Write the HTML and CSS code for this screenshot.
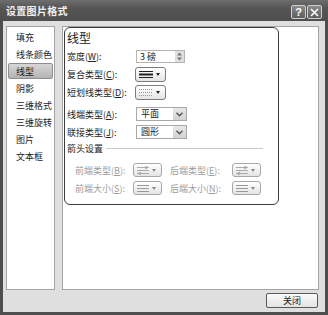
FILE: index.html
```html
<!DOCTYPE html>
<html lang="zh-CN">
<head>
    <meta charset="UTF-8">
    <title>设置图片格式</title>
    <link rel="stylesheet" href="styles.css">
</head>
<body>

    <div class="dialog">
        <div class="titlebar">
            <span class="title">设置图片格式</span>
            <div class="caption-btns">
                <span class="cap-btn">?</span>
                <span class="cap-btn">
                    <svg width="9" height="9" viewBox="0 0 9 9"><path d="M1 1 L8 8 M8 1 L1 8" stroke="#fff" stroke-width="1.6"/></svg>
                </span>
            </div>
        </div>

        <div class="body">
            <div class="panes">
                <ul class="nav">
                    <li>填充</li>
                    <li>线条颜色</li>
                    <li class="selected">线型</li>
                    <li>阴影</li>
                    <li>三维格式</li>
                    <li>三维旋转</li>
                    <li>图片</li>
                    <li>文本框</li>
                </ul>

                <div class="page">
                    <div class="group">
                        <div class="group-title">线型</div>

                        <div class="row">
                            <span class="label">宽度(<u>W</u>):</span>
                            <div class="spinner">
                                <span class="spin-value">3 磅</span>
                                <span class="spin-btn">
                                    <svg width="7" height="9" viewBox="0 0 7 9"><path d="M3.5 0.5 L6 3.5 L1 3.5 Z M3.5 8.5 L6 5.5 L1 5.5 Z" fill="#777"/></svg>
                                </span>
                            </div>
                        </div>

                        <div class="row">
                            <span class="label">复合类型(<u>C</u>):</span>
                            <div class="pick">
                                <svg width="14" height="9" viewBox="0 0 14 9"><path d="M0 1.5 H14 M0 7.5 H14" stroke="#222" stroke-width="1"/><path d="M0 4.5 H14" stroke="#222" stroke-width="2"/></svg>
                                <span class="caret"></span>
                            </div>
                        </div>

                        <div class="row">
                            <span class="label">短划线类型(<u>D</u>):</span>
                            <div class="pick">
                                <svg width="14" height="9" viewBox="0 0 14 9"><path d="M0 1.5 H14 M0 4.5 H14 M0 7.5 H14" stroke="#999" stroke-width="1" stroke-dasharray="1 1"/></svg>
                                <span class="caret"></span>
                            </div>
                        </div>

                        <div class="row gap">
                            <span class="label">线端类型(<u>A</u>):</span>
                            <div class="select">
                                <span class="select-value">平面</span>
                                <span class="select-btn">
                                    <svg width="7" height="5" viewBox="0 0 7 5"><path d="M0.5 0.8 L3.5 3.8 L6.5 0.8" fill="none" stroke="#555" stroke-width="1.4"/></svg>
                                </span>
                            </div>
                        </div>

                        <div class="row">
                            <span class="label">联接类型(<u>J</u>):</span>
                            <div class="select">
                                <span class="select-value">圆形</span>
                                <span class="select-btn">
                                    <svg width="7" height="5" viewBox="0 0 7 5"><path d="M0.5 0.8 L3.5 3.8 L6.5 0.8" fill="none" stroke="#555" stroke-width="1.4"/></svg>
                                </span>
                            </div>
                        </div>

                        <div class="subhead">
                            <span>箭头设置</span>
                            <span class="rule"></span>
                        </div>

                        <div class="row sub">
                            <span class="label dim">前端类型(<u>B</u>):</span>
                            <div class="pick small disabled">
                                <svg width="12" height="9" viewBox="0 0 12 9"><path d="M0 1.5 H12 M0 4.5 H12 M0 7.5 H12" stroke="#aaa" stroke-width="1"/><path d="M8 0 L11 1.5 L8 3 M4 6 L1 7.5 L4 9" fill="none" stroke="#aaa" stroke-width="1"/></svg>
                                <span class="caret"></span>
                            </div>
                            <span class="label dim second">后端类型(<u>E</u>):</span>
                            <div class="pick small disabled">
                                <svg width="12" height="9" viewBox="0 0 12 9"><path d="M0 1.5 H12 M0 4.5 H12 M0 7.5 H12" stroke="#aaa" stroke-width="1"/><path d="M8 0 L11 1.5 L8 3 M4 6 L1 7.5 L4 9" fill="none" stroke="#aaa" stroke-width="1"/></svg>
                                <span class="caret"></span>
                            </div>
                        </div>

                        <div class="row sub">
                            <span class="label dim">前端大小(<u>S</u>):</span>
                            <div class="pick small disabled">
                                <svg width="12" height="9" viewBox="0 0 12 9"><path d="M0 1.5 H12 M0 4.5 H12 M0 7.5 H12" stroke="#999" stroke-width="1.2"/></svg>
                                <span class="caret"></span>
                            </div>
                            <span class="label dim second">后端大小(<u>N</u>):</span>
                            <div class="pick small disabled">
                                <svg width="12" height="9" viewBox="0 0 12 9"><path d="M0 1.5 H12 M0 4.5 H12 M0 7.5 H12" stroke="#999" stroke-width="1.2"/></svg>
                                <span class="caret"></span>
                            </div>
                        </div>
                    </div>
                </div>
            </div>

            <div class="footer">
                <button class="btn">关闭</button>
            </div>
        </div>
    </div>

</body>
</html>
```

FILE: styles.css
```css
body {
    margin: 0;
    font-family: "Noto Sans CJK SC", "Liberation Sans", sans-serif;
    font-size: 9px;
    color: #222;
}
.dialog {
    width: 328px;
    height: 315px;
    box-sizing: border-box;
    padding: 0 3px 3px 3px;
    background-color: #4e4e4e;
    display: flex;
    flex-direction: column;
}
.titlebar {
    height: 21px;
    flex-shrink: 0;
    display: flex;
    align-items: center;
    justify-content: space-between;
    background: linear-gradient(#6e6e6e, #555 40%, #4e4e4e);
    margin: 0 -3px;
    padding: 0 6px 0 6px;
}
.title {
    color: #f2f2f2;
    font-weight: bold;
    font-size: 10px;
    letter-spacing: 0.3px;
    line-height: 12px;
}
.caption-btns {
    display: flex;
    gap: 1px;
    margin-top: 3px;
}
.cap-btn {
    width: 13px;
    height: 12px;
    border: 1px solid #d0d0d0;
    border-radius: 2px;
    background: linear-gradient(#8a8a8a, #5e5e5e);
    color: #fff;
    font-family: "Liberation Sans", sans-serif;
    font-weight: bold;
    font-size: 11px;
    line-height: 12px;
    text-align: center;
    display: flex;
    align-items: center;
    justify-content: center;
}
.body {
    flex: 1;
    background-color: #dfdfdf;
    padding: 5px 6px 0 3px;
    display: flex;
    flex-direction: column;
}
.panes {
    height: 264px;
    display: flex;
    gap: 7px;
}
.nav {
    width: 49px;
    box-sizing: border-box;
    margin: 0;
    padding: 2px 1px 0 1px;
    list-style: none;
    background-color: #fff;
    border: 1px solid #a4a4a4;
}
.nav li {
    height: 17px;
    line-height: 17px;
    padding-left: 8px;
    white-space: nowrap;
    box-sizing: border-box;
}
.nav li.selected {
    height: 16px;
    line-height: 15px;
    margin-bottom: 1px;
    border: 1px solid #8e8e8e;
    border-radius: 2px;
    padding-left: 7px;
    background: linear-gradient(#d6d6d6, #b4b4b4);
}
.page {
    flex: 1;
    background-color: #fff;
    border: 1px solid #a4a4a4;
    padding-left: 1px;
}
.group {
    width: 215px;
    box-sizing: border-box;
    border: 1px solid #3c3c3c;
    border-radius: 6px;
    padding: 1px 0 7px 2px;
}
.group-title {
    height: 18px;
    line-height: 17px;
    font-size: 12px;
}
.row {
    height: 18px;
    display: flex;
    align-items: center;
}
.row.gap {
    margin-top: 4px;
}
.label {
    width: 69px;
    flex-shrink: 0;
    white-space: nowrap;
}
.label.dim {
    color: #9c9c9c;
}
.row.sub .label {
    width: 58px;
}
.row.sub {
    padding-left: 8px;
}
.row.sub .label.second {
    width: 62px;
    margin-left: 8px;
}
.subhead {
    height: 14px;
    display: flex;
    align-items: center;
    gap: 3px;
    margin-bottom: 6px;
}
.rule {
    width: 157px;
    height: 1px;
    background-color: #c8c8c8;
}
.spinner {
    width: 49px;
    height: 13px;
    box-sizing: border-box;
    border: 1px solid #b4b4b4;
    display: flex;
    align-items: center;
    justify-content: space-between;
}
.spin-value {
    padding-left: 3px;
    line-height: 11px;
}
.spin-btn {
    width: 9px;
    height: 11px;
    background-color: #dedede;
    display: flex;
    align-items: center;
    justify-content: center;
}
.pick {
    width: 31px;
    height: 15px;
    box-sizing: border-box;
    margin-left: -1px;
    border: 1px solid #7c7c7c;
    border-radius: 3px;
    background: linear-gradient(#ffffff, #e4e4e4);
    display: flex;
    align-items: center;
    padding-left: 3px;
    gap: 3px;
}
.pick.small {
    width: 29px;
    height: 14px;
    margin-left: 0;
}
.pick.disabled {
    border-color: #a8a8a8;
}
.caret {
    width: 0;
    height: 0;
    border-left: 2.5px solid transparent;
    border-right: 2.5px solid transparent;
    border-top: 3px solid #222;
}
.pick.disabled .caret {
    border-top-color: #888;
}
.select {
    width: 51px;
    height: 14px;
    box-sizing: border-box;
    border: 1px solid #a8a8a8;
    display: flex;
    align-items: center;
    justify-content: space-between;
}
.select-value {
    padding-left: 4px;
    line-height: 12px;
}
.select-btn {
    width: 13px;
    height: 12px;
    background: linear-gradient(#e8e8e8, #d2d2d2);
    display: flex;
    align-items: center;
    justify-content: center;
}
.footer {
    display: flex;
    justify-content: flex-end;
    padding-top: 3px;
}
.btn {
    width: 52px;
    height: 15px;
    margin-right: 1px;
    padding: 0;
    border: 1px solid #5a5a5a;
    border-radius: 2px;
    background: linear-gradient(#fbfbfb, #e2e2e2);
    font-family: "Noto Sans CJK SC", sans-serif;
    font-size: 9px;
    line-height: 13px;
    color: #222;
}
```
